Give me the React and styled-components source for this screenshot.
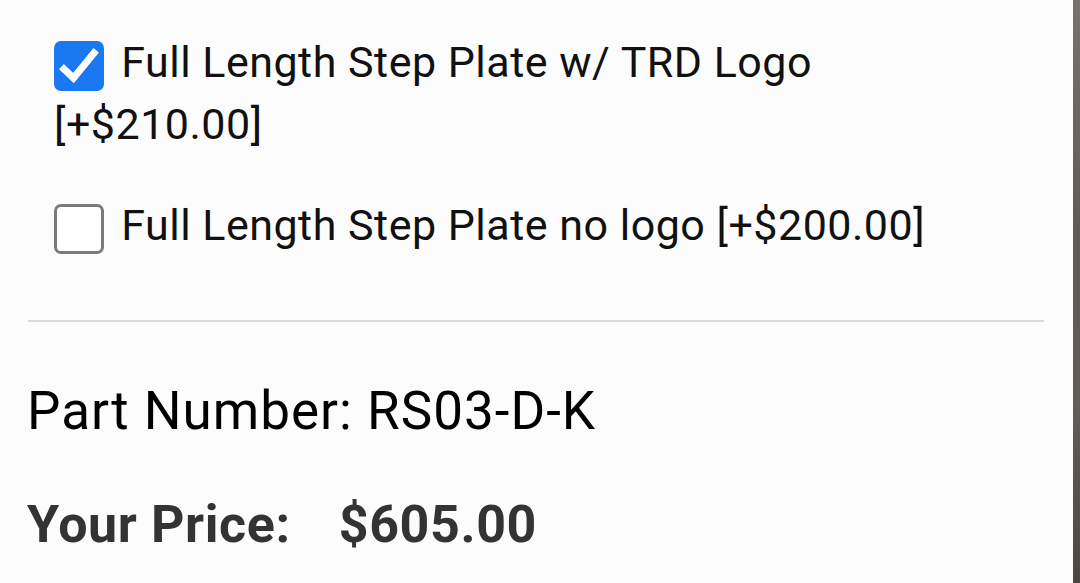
import React from 'react';
import styled, { createGlobalStyle } from 'styled-components';

const options = [
  { id: 'logo', label: 'Full Length Step Plate w/ TRD Logo', price: '[+$210.00]', checked: true },
  { id: 'nologo', label: 'Full Length Step Plate no logo', price: '[+$200.00]', checked: false },
];

export default function App() {
  return (
    <>
      <GlobalStyle />
      <Page>
        <Main>
          <OptionList>
            {options.map((opt) => (
              <Option key={opt.id}>
                <Box $checked={opt.checked}>
                  {opt.checked && (
                    <svg width="50" height="50" viewBox="0 0 50 50">
                      <path
                        d="M10 28 L19.5 37 L40 12"
                        fill="none"
                        stroke="#fff"
                        strokeWidth="7"
                        strokeLinecap="square"
                        strokeLinejoin="miter"
                      />
                    </svg>
                  )}
                </Box>{' '}
                {opt.label} {opt.price}
              </Option>
            ))}
          </OptionList>

          <Divider />

          <PartNumber>Part Number: RS03-D-K</PartNumber>

          <PriceRow>
            <span>Your Price:</span>
            <span>$605.00</span>
          </PriceRow>
        </Main>
        <SideStrip />
      </Page>
    </>
  );
}

const GlobalStyle = createGlobalStyle`
  html, body {
    margin: 0;
    padding: 0;
    background: #fcfcfc;
  }
  body {
    font-family: Roboto, "Liberation Sans", sans-serif;
  }
`;

const Page = styled.div`
  display: flex;
  width: 1080px;
  height: 583px;
  overflow: hidden;
  background: #fcfcfc;
`;

const Main = styled.main`
  flex: 1;
  padding: 0 29px 0 27px;
`;

const SideStrip = styled.div`
  width: 7px;
  background: linear-gradient(180deg, #7a736d 0%, #5f5a55 40%, #635c57 70%, #4c4542 100%);
`;

const OptionList = styled.div`
  padding: 31px 60px 0 27px;
`;

const Option = styled.label`
  display: block;
  font-size: 43px;
  line-height: 62px;
  letter-spacing: 0.5px;
  color: #111;
  margin-bottom: 39px;

  &:last-child {
    margin-bottom: 0;
  }
`;

const Box = styled.span`
  display: inline-flex;
  align-items: center;
  justify-content: center;
  box-sizing: border-box;
  width: 50px;
  height: 50px;
  margin-right: 6px;
  vertical-align: middle;
  border-radius: 7px;
  background: ${(p) => (p.$checked ? '#1a79f0' : '#fff')};
  border: ${(p) => (p.$checked ? 'none' : '3px solid #7a7a7a')};
`;

const Divider = styled.hr`
  border: none;
  border-top: 2px solid #d9d9d9;
  margin: 64px 0 0 1px;
`;

const PartNumber = styled.div`
  font-size: 53px;
  line-height: 62px;
  letter-spacing: 1px;
  color: #000;
  margin-top: 58px;
`;

const PriceRow = styled.div`
  display: flex;
  gap: 48px;
  font-size: 52px;
  line-height: 62px;
  letter-spacing: 0.6px;
  font-weight: 700;
  color: #333;
  margin-top: 52px;
`;
